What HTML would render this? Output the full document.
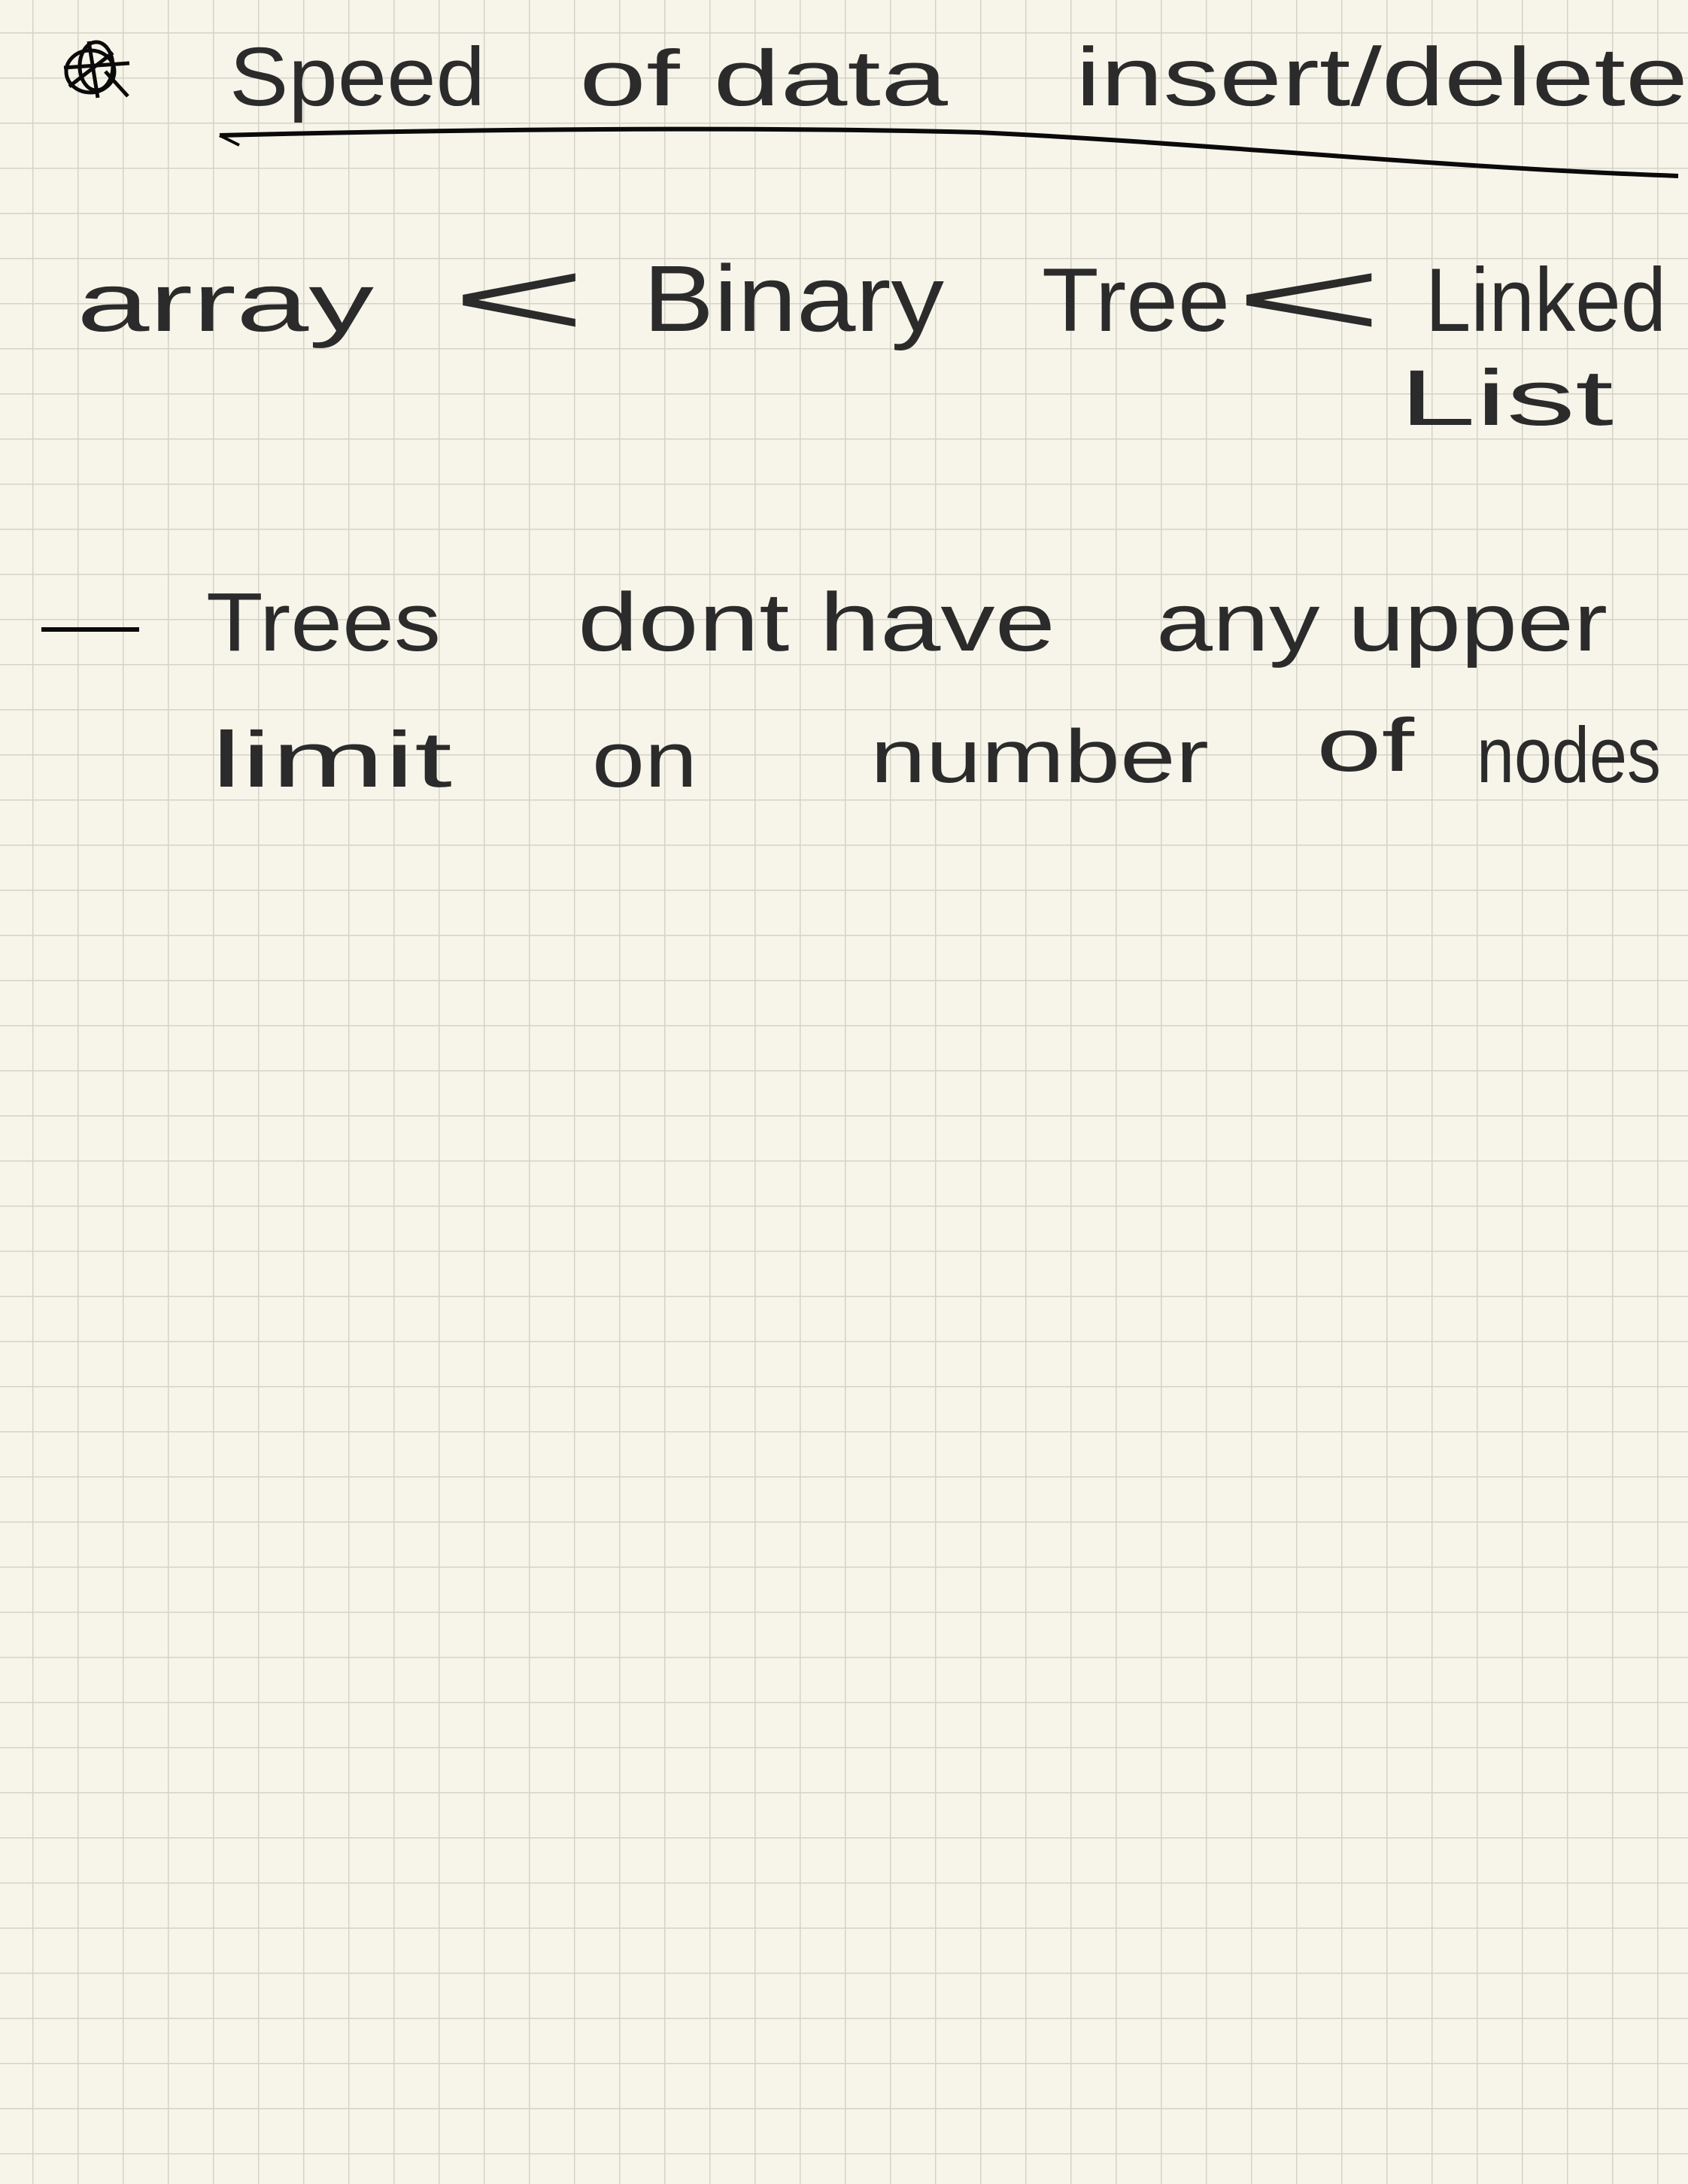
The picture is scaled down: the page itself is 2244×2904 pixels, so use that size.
<!DOCTYPE html>
<html><head><meta charset="utf-8">
<style>
html,body{margin:0;padding:0;}
body{width:2244px;height:2904px;background:#f7f5e9;overflow:hidden;}
svg{display:block;}
text{font-family:"Liberation Sans",sans-serif;fill:#2b2b2b;}
</style></head>
<body>
<svg width="2244" height="2904" viewBox="0 0 2244 2904" xmlns="http://www.w3.org/2000/svg">
<defs>
<pattern id="g" x="43" y="43" width="60" height="60" patternUnits="userSpaceOnUse">
<path d="M0 0H60M0 0V60" stroke="#d4d3c7" stroke-width="3" fill="none"/>
</pattern>
</defs>
<rect width="2244" height="2904" fill="#f7f5e9"/>
<rect width="2244" height="2904" fill="url(#g)"/>
<g stroke="#0a0a0a" stroke-width="5" fill="none">
<ellipse cx="120" cy="95" rx="32" ry="28"/>
<ellipse cx="128" cy="88" rx="22" ry="32"/>
<path d="M85 90 L172 84 M118 55 L130 130 M140 95 L170 128 M92 115 L150 70"/>
</g>
<text x="305" y="140" font-size="110" textLength="340" lengthAdjust="spacingAndGlyphs">Speed</text>
<text x="770" y="140" font-size="105" textLength="490" lengthAdjust="spacingAndGlyphs">of data</text>
<text x="1430" y="140" font-size="110" textLength="814" lengthAdjust="spacingAndGlyphs">insert/delete</text>
<path d="M292 180 C600 172 1000 168 1300 176 C1600 190 1900 222 2231 234" stroke="#0a0a0a" stroke-width="6" fill="none"/>
<path d="M292 180 L318 193" stroke="#0a0a0a" stroke-width="4" fill="none"/>
<text x="102" y="440" font-size="110" textLength="395" lengthAdjust="spacingAndGlyphs">array</text>
<text x="600" y="445" font-size="140" textLength="180" lengthAdjust="spacingAndGlyphs">&lt;</text>
<text x="855" y="440" font-size="125" textLength="400" lengthAdjust="spacingAndGlyphs">Binary</text>
<text x="1385" y="440" font-size="120" textLength="250" lengthAdjust="spacingAndGlyphs">Tree</text>
<text x="1640" y="445" font-size="140" textLength="200" lengthAdjust="spacingAndGlyphs">&lt;</text>
<text x="1895" y="440" font-size="120" textLength="320" lengthAdjust="spacingAndGlyphs">Linked</text>
<text x="1860" y="565" font-size="105" textLength="285" lengthAdjust="spacingAndGlyphs">List</text>
<path d="M55 837 L185 837" stroke="#0a0a0a" stroke-width="6"/>
<text x="274" y="865" font-size="110" textLength="312" lengthAdjust="spacingAndGlyphs">Trees</text>
<text x="768" y="865" font-size="110" textLength="635" lengthAdjust="spacingAndGlyphs">dont have</text>
<text x="1537" y="865" font-size="110" textLength="600" lengthAdjust="spacingAndGlyphs">any upper</text>
<text x="281" y="1046" font-size="105" textLength="320" lengthAdjust="spacingAndGlyphs">limit</text>
<text x="787" y="1046" font-size="105" textLength="140" lengthAdjust="spacingAndGlyphs">on</text>
<text x="1157" y="1040" font-size="100" textLength="450" lengthAdjust="spacingAndGlyphs">number</text>
<text x="1750" y="1025" font-size="100" textLength="130" lengthAdjust="spacingAndGlyphs">of</text>
<text x="1963" y="1040" font-size="105" textLength="245" lengthAdjust="spacingAndGlyphs">nodes</text>
</svg>
</body></html>
